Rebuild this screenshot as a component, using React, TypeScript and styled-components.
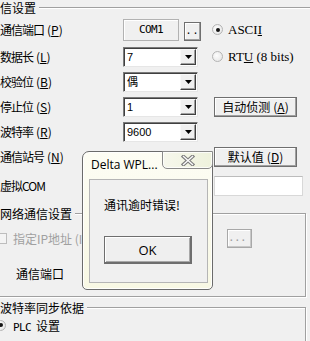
import styled, { createGlobalStyle } from 'styled-components';

const GlobalStyle = createGlobalStyle`
  html, body {
    margin: 0;
    padding: 0;
    background: #f0f0f0;
  }
  body {
    font-family: "Noto Sans CJK SC", "Liberation Sans", sans-serif;
    font-size: 12px;
    color: #000;
    overflow: hidden;
  }
  * {
    box-sizing: border-box;
  }
`;

const cjk = `"Noto Sans CJK SC", "Liberation Sans", sans-serif`;
const mono = `"DejaVu Sans Mono", "Liberation Mono", monospace`;
const serif = `"Liberation Serif", "Noto Sans CJK SC", serif`;
const ui = `"Open Sans", "Noto Sans", sans-serif`;

const Page = styled.div`
  position: relative;
  width: 310px;
  height: 341px;
  overflow: hidden;
  background: #f0f0f0;
`;

const GroupHeader = styled.div`
  display: flex;
  align-items: center;
  height: 15px;
  line-height: 15px;
  white-space: nowrap;

  &::after {
    content: '';
    flex: 1;
    margin-left: 3px;
    border-top: 1px solid #a0a0a0;
    border-bottom: 1px solid #fff;
  }
`;

const FormGrid = styled.div`
  display: grid;
  grid-template-columns: 123px 89px 94px;
  grid-template-rows: 29px repeat(5, 25px) 34px;
  align-items: center;
`;

const FieldLabel = styled.div`
  white-space: nowrap;
  line-height: 14px;
  letter-spacing: -1px;
`;

const Key = styled.span`
  margin-left: 3px;
  letter-spacing: 0;
`;

const Cell = styled.div`
  display: flex;
  align-items: center;
`;

const ComBox = styled.div`
  width: 56px;
  height: 22px;
  display: flex;
  align-items: center;
  justify-content: center;
  border: 1px solid #b2b2b2;
  box-shadow: inset 1px 1px 0 #fff;
  font-family: ${mono};
  font-size: 11px;
  letter-spacing: -0.6px;
`;

const RaisedButton = styled.button<{ $w: number; $h: number; $disabled?: boolean }>`
  width: ${(p) => p.$w}px;
  height: ${(p) => p.$h}px;
  padding: 0;
  display: flex;
  align-items: center;
  justify-content: center;
  background: #f0f0f0;
  border: 1px solid ${(p) => (p.$disabled ? '#a8a8a8' : '#6f6f6f')};
  box-shadow: inset -1px -1px 0 ${(p) => (p.$disabled ? '#c8c8c8' : '#a0a0a0')}, inset 1px 1px 0 #fff;
  font-family: ${cjk};
  font-size: 12px;
  line-height: 14px;
  color: ${(p) => (p.$disabled ? '#a0a0a0' : '#000')};
  white-space: nowrap;
`;

const DotsButton = styled(RaisedButton)`
  margin: 3px 0 0 5px;
  font-family: ${mono};
  font-size: 10px;
  letter-spacing: 1px;
`;

const SideButton = styled(RaisedButton)`
  margin-left: 2px;
`;

const Combo = styled.div`
  width: 75px;
  height: 20px;
  display: flex;
  background: #fff;
  border: 1px solid;
  border-color: #7a7a7a #e6e6e6 #e6e6e6 #7a7a7a;
  box-shadow: inset 1px 1px 0 #404040;
`;

const ComboValue = styled.span`
  flex: 1;
  padding: 1px 0 0 3px;
  font-family: "Liberation Sans", ${cjk};
  font-size: 11px;
  line-height: 17px;
`;

const ComboArrow = styled.span`
  width: 16px;
  margin: 1px 1px 1px 0;
  display: flex;
  align-items: center;
  justify-content: center;
  background: #f0f0f0;
  border: 1px solid;
  border-color: #f8f8f8 #404040 #404040 #f8f8f8;
  box-shadow: inset -1px -1px 0 #a0a0a0;
`;

const RadioRow = styled.label`
  display: flex;
  align-items: center;
  gap: 5px;
  font-family: ${serif};
  font-size: 13px;
  white-space: nowrap;
`;

const RadioCircle = styled.span<{ $checked?: boolean }>`
  width: 11px;
  height: 11px;
  flex: none;
  display: flex;
  align-items: center;
  justify-content: center;
  border: 1px solid #b4b4b4;
  border-radius: 50%;
  background: radial-gradient(circle at 40% 40%, #fdfdfd, #e2e2e2);

  &::after {
    content: '';
    display: ${(p) => (p.$checked ? 'block' : 'none')};
    width: 4px;
    height: 4px;
    border-radius: 50%;
    background: #151515;
  }
`;

const TextInput = styled.div`
  width: 89px;
  height: 20px;
  margin-left: 2px;
  background: #fff;
  border: 1px solid #d8d8d8;
  border-top-color: #bcbcbc;
`;

const GroupBox = styled.div<{ $h: number; $top: number }>`
  width: 312px;
  height: ${(p) => p.$h}px;
  margin: ${(p) => p.$top}px 0 0 -6px;
  border: 1px solid #a0a0a0;
  box-shadow: 1px 1px 0 #fff, inset 1px 1px 0 #fff;
`;

const Legend = styled.div<{ $x: number }>`
  width: fit-content;
  margin: -7px 0 0 ${(p) => p.$x}px;
  padding-right: 3px;
  background: #f0f0f0;
  line-height: 14px;
  white-space: nowrap;
`;

const CheckRow = styled.div`
  display: grid;
  grid-template-columns: 232px 25px;
  align-items: center;
  height: 20px;
  margin-top: 7px;
`;

const CheckLabel = styled.label`
  display: flex;
  align-items: center;
  gap: 6px;
  margin-left: 1px;
  color: #a0a0a0;
  white-space: nowrap;
`;

const CheckBox = styled.span`
  width: 11px;
  height: 11px;
  flex: none;
  border: 1px solid #bdbdbd;
  background: #f4f4f4;
`;

const PortLabel = styled.div`
  margin: 19px 0 0 21px;
  line-height: 14px;
`;

const PlcRow = styled.label`
  display: flex;
  align-items: center;
  gap: 7px;
  height: 14px;
  margin: 3px 0 0 0;
  white-space: nowrap;
`;

const Mono = styled.span`
  font-family: ${mono};
  font-size: 11px;
  letter-spacing: -0.6px;
  margin-right: 5px;
`;

const Dialog = styled.div`
  position: absolute;
  left: 82px;
  top: 151px;
  width: 131px;
  height: 139px;
  display: flex;
  flex-direction: column;
  border: 1px solid #6b6b6b;
  border-radius: 7px 7px 5px 5px;
  background: linear-gradient(#fdfdf4, #f8f8e4);
  box-shadow: inset 0 0 0 1px rgba(255, 255, 255, 0.9);
`;

const TitleBar = styled.div`
  display: flex;
  align-items: flex-start;
  height: 27px;
  flex: none;
`;

const TitleText = styled.span`
  padding: 5px 0 0 8px;
  font-family: ${ui};
  font-size: 12px;
  line-height: 16px;
  white-space: nowrap;
`;

const CloseButton = styled.span`
  width: 51px;
  height: 18px;
  margin: -1px -1px 0 auto;
  display: flex;
  align-items: center;
  justify-content: center;
  border: 1px solid #8a8a8a;
  border-radius: 0 0 5px 5px;
  background: linear-gradient(90deg, #f6f7ec, #eef2dc);
  box-shadow: inset 0 0 0 1px rgba(255, 255, 255, 0.8);
`;

const DialogBody = styled.div`
  flex: 1;
  margin: 0 4px 6px 6px;
  background: #f0f0f0;
  border: 1px solid #b5b5b5;
`;

const Message = styled.div`
  padding: 18px 0 0 14px;
  line-height: 14px;
  white-space: nowrap;
`;

const OkButton = styled.button`
  width: 88px;
  height: 28px;
  margin: 24px 0 0 14px;
  padding: 0;
  background: #efefef;
  border: 1px solid #6e6e6e;
  border-right-width: 2px;
  border-bottom-width: 2px;
  box-shadow: inset 1px 1px 0 #fff, inset -1px -1px 0 #a8a8a8;
  font-family: ${ui};
  font-size: 13px;
  color: #000;
`;

function Arrow() {
  return (
    <svg width="7" height="4" viewBox="0 0 7 4">
      <path d="M0 0h7L3.5 4z" fill="#000" />
    </svg>
  );
}

function CloseGlyph() {
  return (
    <svg width="14" height="11" viewBox="0 0 14 11">
      <path d="M2.5 1.5l9 8M11.5 1.5l-9 8" stroke="#7c7c7c" strokeWidth="3.6" strokeLinecap="square" />
      <path d="M2.5 1.5l9 8M11.5 1.5l-9 8" stroke="#fbfbfb" strokeWidth="1.4" strokeLinecap="square" />
    </svg>
  );
}

function Select({ value }: { value: string }) {
  return (
    <Combo>
      <ComboValue>{value}</ComboValue>
      <ComboArrow>
        <Arrow />
      </ComboArrow>
    </Combo>
  );
}

function Label({ text, k }: { text: string; k?: string }) {
  return (
    <FieldLabel>
      {text}
      {k ? (
        <Key>
          (<u>{k}</u>)
        </Key>
      ) : null}
    </FieldLabel>
  );
}

export default function App() {
  return (
    <Page>
      <GlobalStyle />
      <GroupHeader>信设置</GroupHeader>

      <FormGrid>
        <Label text="通信端口" k="P" />
        <Cell>
          <ComBox>COM1</ComBox>
          <DotsButton $w={17} $h={19}>..</DotsButton>
        </Cell>
        <RadioRow>
          <RadioCircle $checked />
          <span>
            ASCI<u>I</u>
          </span>
        </RadioRow>

        <Label text="数据长" k="L" />
        <Select value="7" />
        <RadioRow>
          <RadioCircle />
          <span>
            RT<u>U</u> (8 bits)
          </span>
        </RadioRow>

        <Label text="校验位" k="B" />
        <Select value="偶" />
        <div />

        <Label text="停止位" k="S" />
        <Select value="1" />
        <SideButton $w={83} $h={20}>
          自动侦测<Key>(<u>A</u>)</Key>
        </SideButton>

        <Label text="波特率" k="R" />
        <Select value="9600" />
        <div />

        <Label text="通信站号" k="N" />
        <div />
        <SideButton $w={83} $h={20}>
          默认值<Key>(<u>D</u>)</Key>
        </SideButton>

        <Label text="虚拟COM" />
        <div />
        <TextInput />
      </FormGrid>

      <GroupBox $h={84} $top={10}>
        <Legend $x={5}>网络通信设置</Legend>
        <CheckRow>
          <CheckLabel>
            <CheckBox />
            指定IP地址 (I)
          </CheckLabel>
          <RaisedButton $w={25} $h={19} $disabled>
            <Mono>...</Mono>
          </RaisedButton>
        </CheckRow>
        <PortLabel>通信端口</PortLabel>
      </GroupBox>

      <GroupBox $h={60} $top={10}>
        <Legend $x={5}>波特率同步依据</Legend>
        <PlcRow>
          <RadioCircle $checked />
          <span>
            <Mono>PLC</Mono>设置
          </span>
        </PlcRow>
      </GroupBox>

      <Dialog>
        <TitleBar>
          <TitleText>Delta WPL...</TitleText>
          <CloseButton>
            <CloseGlyph />
          </CloseButton>
        </TitleBar>
        <DialogBody>
          <Message>通讯逾时错误!</Message>
          <OkButton>OK</OkButton>
        </DialogBody>
      </Dialog>
    </Page>
  );
}
